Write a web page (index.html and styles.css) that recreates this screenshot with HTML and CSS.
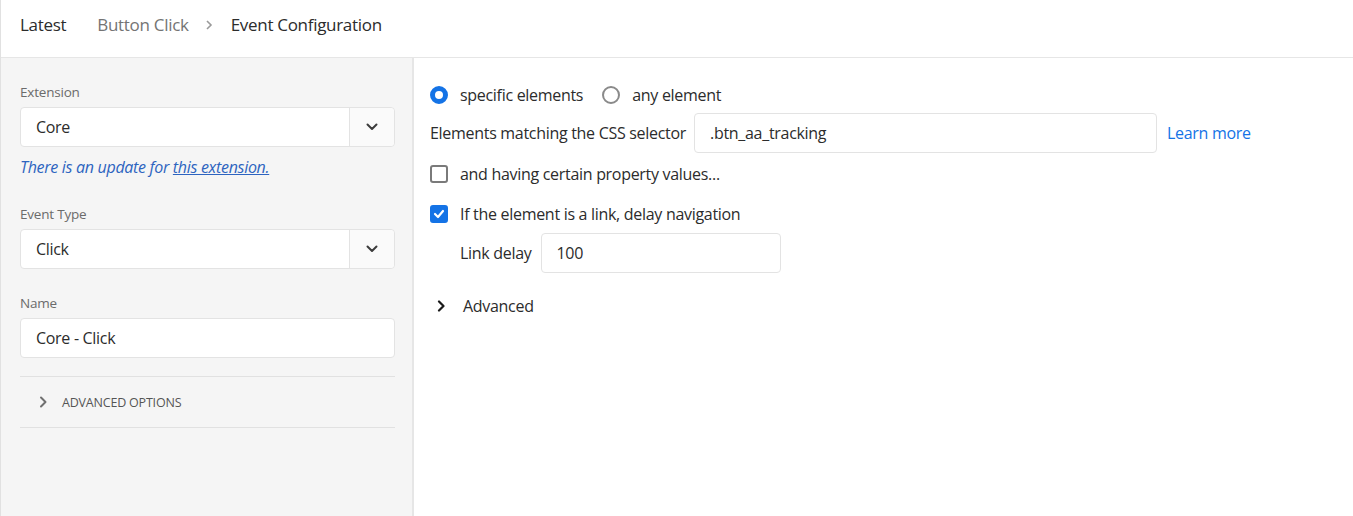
FILE: index.html
```html
<!DOCTYPE html>
<html>
<head>
<meta charset="utf-8">
<link rel="stylesheet" href="styles.css">
</head>
<body>
<div class="app">
  <header class="header">
    <span class="crumb crumb-root">Latest</span>
    <span class="crumb crumb-muted">Button Click</span>
    <svg class="crumb-sep" width="10" height="12" viewBox="0 0 10 12"><path d="M3 2 L7 6 L3 10" fill="none" stroke="#9a9a9a" stroke-width="1.6"/></svg>
    <span class="crumb">Event Configuration</span>
  </header>
  <div class="main">
    <aside class="sidebar">
      <div class="field field-ext">
        <label class="label">Extension</label>
        <div class="select">
          <span class="select-value">Core</span>
          <span class="select-btn"><svg width="12" height="8" viewBox="0 0 12 8"><path d="M1.5 1.5 L6 6 L10.5 1.5" fill="none" stroke="#3c3c3c" stroke-width="2" stroke-linecap="round" stroke-linejoin="round"/></svg></span>
        </div>
        <p class="update">There is an update for <a class="update-link">this extension.</a></p>
      </div>
      <div class="field">
        <label class="label">Event Type</label>
        <div class="select">
          <span class="select-value">Click</span>
          <span class="select-btn"><svg width="12" height="8" viewBox="0 0 12 8"><path d="M1.5 1.5 L6 6 L10.5 1.5" fill="none" stroke="#3c3c3c" stroke-width="2" stroke-linecap="round" stroke-linejoin="round"/></svg></span>
        </div>
      </div>
      <div class="field field-last">
        <label class="label">Name</label>
        <div class="textbox"><span>Core - Click</span></div>
      </div>
      <div class="adv-options">
        <svg width="8" height="12" viewBox="0 0 8 12"><path d="M2 1.5 L6.5 6 L2 10.5" fill="none" stroke="#707070" stroke-width="2" stroke-linecap="round" stroke-linejoin="round"/></svg>
        <span>ADVANCED OPTIONS</span>
      </div>
    </aside>
    <section class="content">
      <div class="row radios">
        <span class="radio radio-on"></span><span class="opt">specific elements</span>
        <span class="radio"></span><span class="opt">any element</span>
      </div>
      <div class="row selector-row">
        <span class="txt">Elements matching the CSS selector</span>
        <div class="textbox wide"><span>.btn_aa_tracking</span></div>
        <a class="learn">Learn more</a>
      </div>
      <div class="row check-row">
        <span class="check"></span><span class="txt">and having certain property values...</span>
      </div>
      <div class="row check-row">
        <span class="check check-on"><svg width="12" height="10" viewBox="0 0 12 10"><path d="M2 5 L5 8 L10 2" fill="none" stroke="#fff" stroke-width="2.2" stroke-linecap="round" stroke-linejoin="round"/></svg></span>
        <span class="txt">If the element is a link, delay navigation</span>
      </div>
      <div class="row delay-row">
        <span class="txt">Link delay</span>
        <div class="textbox mid"><span>100</span></div>
      </div>
      <div class="row advanced">
        <svg width="8" height="12" viewBox="0 0 8 12"><path d="M2 1.5 L6.5 6 L2 10.5" fill="none" stroke="#1a1a1a" stroke-width="2.2" stroke-linecap="round" stroke-linejoin="round"/></svg>
        <span>Advanced</span>
      </div>
    </section>
  </div>
</div>
</body>
</html>
```
FILE: styles.css
```css
* { box-sizing: border-box; }
html, body { margin: 0; padding: 0; height: 100%; }
body {
  font-family: "Open Sans", "Noto Sans", sans-serif;
  color: #2c2c2c;
  background: #fff;
}
.app {
  height: 516px;
  display: flex;
  flex-direction: column;
  border-left: 1px solid #e1e1e1;
}
.header {
  height: 58px;
  flex: none;
  display: flex;
  align-items: center;
  padding: 0 0 8px 19px;
  border-bottom: 1px solid #e6e6e6;
  font-size: 17px;
  letter-spacing: -0.3px;
}
.crumb { color: #2c2c2c; }
.crumb-root { margin-right: 31px; }
.crumb-muted { color: #747474; }
.crumb-sep { margin: 0 17px 0 15px; }
.main { flex: 1; display: flex; }
.sidebar {
  width: 413px;
  flex: none;
  background: #f5f5f5;
  border-right: 2px solid #e6e6e6;
  padding: 25px 17px 0 19px;
}
.field { margin-bottom: 25px; }
.field-ext { margin-bottom: 27px; }
.field-last { margin-bottom: 18px; }
.label {
  display: block;
  font-size: 13.5px;
  color: #6b6b6b;
  letter-spacing: -0.2px;
  margin-bottom: 6px;
}
.select, .textbox {
  height: 40px;
  background: #fff;
  border: 1px solid #e3e3e3;
  border-radius: 4px;
  display: flex;
  align-items: center;
  font-size: 16px;
  letter-spacing: -0.3px;
}
.select-value, .textbox span { padding-left: 15px; flex: 1; }
.select-btn {
  width: 45px;
  height: 100%;
  border-left: 1px solid #e3e3e3;
  background: #fafafa;
  border-radius: 0 4px 4px 0;
  display: flex;
  align-items: center;
  justify-content: center;
}
.update {
  margin: 9px 0 0 0;
  font-size: 16px;
  font-style: italic;
  color: #2d64c0;
  letter-spacing: -0.3px;
}
.update-link { text-decoration: underline; }
.adv-options {
  margin-top: 0;
  border-top: 1px solid #e1e1e1;
  border-bottom: 1px solid #e1e1e1;
  height: 52px;
  display: flex;
  align-items: center;
  padding-left: 19px;
  font-size: 12.5px;
  color: #555;
  letter-spacing: -0.2px;
}
.adv-options svg { margin-right: 15px; }
.content {
  flex: 1;
  padding: 23px 16px 0 16px;
  font-size: 16px;
  letter-spacing: -0.3px;
}
.row { display: flex; align-items: center; }
.radios { height: 28px; }
.radio {
  width: 18px; height: 18px;
  border-radius: 50%;
  border: 2px solid #8a8a8a;
  margin-right: 12px;
  background: #fff;
}
.radio-on { border: 5px solid #1473e6; }
.opt { margin-right: 19px; }
.selector-row { height: 40px; margin-top: 4px; }
.selector-row .txt { margin-right: 8px; }
.wide { width: 463px; }
.learn { color: #1473e6; margin-left: 10px; }
.check-row { height: 28px; margin-top: 7px; }
.check-row + .check-row { margin-top: 12px; }
.check {
  width: 18px; height: 18px;
  border: 2px solid #7a7a7a;
  border-radius: 3px;
  margin-right: 12px;
  background: #fff;
  display: flex;
  align-items: center;
  justify-content: center;
}
.check-on { background: #1473e6; border-color: #1473e6; }
.delay-row { height: 40px; margin-top: 5px; padding-left: 30px; }
.delay-row .txt { margin-right: 9px; }
.mid { width: 240px; }
.advanced { margin-top: 19px; height: 28px; padding-left: 7px; font-weight: 500; }
.advanced svg { margin-right: 18px; }
```
